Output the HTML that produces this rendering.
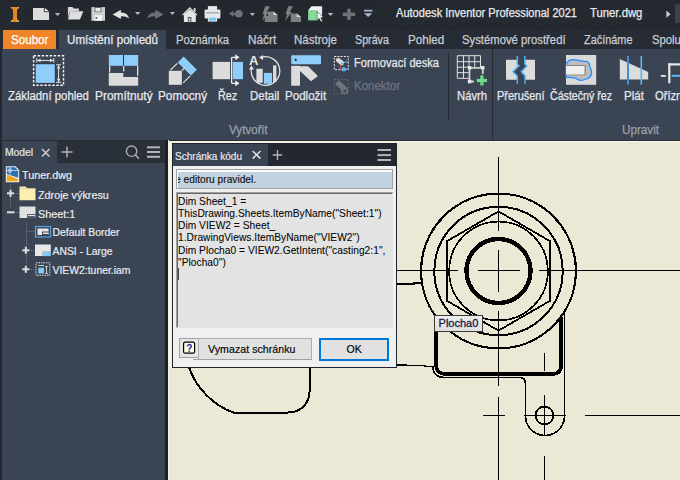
<!DOCTYPE html>
<html><head><meta charset="utf-8">
<style>
*{margin:0;padding:0;box-sizing:border-box}
html,body{width:680px;height:480px;overflow:hidden;background:#3b4453;font-family:"Liberation Sans",sans-serif}
.a{position:absolute}
.t{position:absolute;white-space:nowrap;line-height:1}
#title{left:0;top:0;width:680px;height:29px;background:#23282f}
#tabs{left:0;top:29px;width:680px;height:20px;background:#262b34}
#ribbon{left:0;top:49px;width:680px;height:91px;background:#3b4453}
.tab{color:#c9ced6;font-size:11.5px}
.lbl{color:#e6e9ee;font-size:11.5px}
.r{font-size:12px;transform-origin:0 0;-webkit-text-stroke:0.25px currentColor}
</style></head><body>
<div id="title" class="a"></div>
<div id="tabs" class="a"></div>
<div class="a" style="left:375px;top:2px;width:305px;height:25px;background:repeating-linear-gradient(-45deg,#23282f 0px,#23282f 2.2px,#292e36 2.2px,#292e36 3px)"></div>
<div class="a" style="left:0;top:2px;width:26px;height:25px;background:repeating-linear-gradient(-45deg,#23282f 0px,#23282f 2.2px,#292e36 2.2px,#292e36 3px)"></div>
<svg class="a" style="left:660px;top:0" width="20" height="29" viewBox="660 0 20 29"><path d="M666.3,10.6 L670.6,14.2 L666.3,17.8 Z" fill="#c8ccd4"/><rect x="675" y="4.4" width="5" height="18.4" fill="#3b4352"/></svg>

<div id="ribbon" class="a"></div>


<!-- QAT -->
<svg class="a" style="left:0;top:0" width="680" height="29" viewBox="0 0 680 29">
<defs><linearGradient id="og" x1="0" x2="1"><stop offset="0" stop-color="#f5a03a"/><stop offset="0.5" stop-color="#e8821f"/><stop offset="1" stop-color="#f5a841"/></linearGradient></defs>
<path d="M10.7,7.1 H19.1 V8 Q17,8.8 16.9,10.5 V18.3 Q17,20 19.1,20.8 V21.9 H10.7 V20.8 Q12.9,20 13.1,18.3 V10.5 Q12.9,8.8 10.7,8 Z" fill="url(#og)"/>
<path d="M33,8 H44.3 L49.1,11.7 V19.9 H33 Z" fill="#dcdcdc"/>
<path d="M44.6,8 L49.1,11.4 H44.6 Z" fill="#f4f4f4"/>
<path d="M44.3,8 V11.7 H49.1" stroke="#1b1f26" stroke-width="0.8" fill="none"/>
<g fill="#a9b8cf">
<path d="M54.9,13 H60.2 L57.55,16.1 Z"/>
<path d="M135,12 H140.4 L137.7,14.9 Z"/>
<path d="M169.8,12 H175 L172.4,15 Z"/>
<path d="M249.8,13 H255 L252.4,16 Z"/>
<path d="M327.7,13 H333.3 L330.5,16 Z"/>
<rect x="364" y="9.8" width="8.4" height="1.7"/>
<path d="M364,13.2 H372.4 L368.2,17 Z"/>
</g>
<!-- open -->
<path d="M67.9,7.1 H72.5 L73.8,8.4 H78.9 V11.2 H70.1 L67.9,17 Z" fill="#d6d6d6"/>
<path d="M70.1,11.2 H83.3 L80,19.6 H67.9 Z" fill="#dedede"/>
<!-- save -->
<path d="M91.4,7.1 H105 V20.75 H91.4 Z" fill="#cfcfcf"/>
<rect x="94.6" y="7.1" width="6.8" height="5" fill="#3a3f47"/>
<rect x="95.3" y="7.8" width="5.4" height="3.8" fill="#eaeaea"/>
<rect x="94.6" y="15.2" width="7.4" height="5.55" fill="#f2f2f2"/>
<rect x="95.6" y="17" width="1.6" height="1.8" fill="#555"/>
<!-- undo -->
<path d="M112.6,14.4 L120.9,9.7 V12.4 Q127.5,12 129.1,18.5 Q125.5,16 120.9,16.4 V19 Z" fill="#e2e2e2"/>
<!-- redo -->
<path d="M163.6,14.4 L155.3,9.7 V12.4 Q148.7,12 147.1,18.5 Q150.7,16 155.3,16.4 V19 Z" fill="#6a6e75"/>
<!-- home -->
<path d="M181.9,14.9 L189.8,7.1 L197.6,14.9 L196.2,15.3 L189.8,9 L183.3,15.3 Z" fill="#e6e6e6"/>
<rect x="193.7" y="8.2" width="1.8" height="3.4" fill="#e6e6e6"/>
<path d="M183.9,14.6 L189.8,9.5 L195.8,14.6 V22.1 H183.9 Z" fill="#e6e6e6"/>
<rect x="187.8" y="17" width="3.6" height="5.1" fill="#4a4f57"/>
<rect x="188.6" y="18" width="2" height="4.1" fill="#bdbdbd"/>
<!-- printer -->
<rect x="207.9" y="6.1" width="9.2" height="3.8" fill="#ececec"/>
<rect x="204.6" y="9.4" width="15.8" height="9.1" rx="1" fill="#e8e8e8"/>
<rect x="206" y="12.2" width="13" height="1.2" fill="#9aa0a8"/>
<rect x="207.9" y="16.9" width="9.2" height="4.7" fill="#ececec"/>
<rect x="208.8" y="17.6" width="7.4" height="3.2" fill="#7cc4f5"/>
<!-- gray icon -->
<circle cx="238.8" cy="13.8" r="3.8" fill="#6f7379"/>
<path d="M229,13.8 L233.5,10.8 V16.8 Z" fill="#6f7379"/>
<rect x="232" y="13" width="3.5" height="1.6" fill="#6f7379"/>
<!-- lightnings -->
<g fill="#7d7f83">
<path d="M265.2,6.2 H270 L266.8,12 H269 L262.1,21 L264.2,14.2 H262.5 Z"/>
<path d="M268,11.5 H273.5 L277.6,15 V21.9 H264.8 V16 H268 Z"/>
<path d="M288.2,6.2 H293 L289.8,12 H292 L285.1,21 L287.2,14.2 H285.5 Z"/>
<path d="M290.8,13.5 H297 L301,17 V21.9 H290.8 Z"/>
</g>
<path d="M273.4,11.5 L277.6,15 H273.4 Z M296.8,13.5 L301,17 H296.8 Z" fill="#d8d8d8"/>
<!-- green box -->
<path d="M308.1,10.4 L311.5,6.5 H322.1 V16 L317.1,20.4 V10.4 Z" fill="#ececec"/>
<path d="M311.5,6.5 H322.1 L317.1,10.4 H308.1 Z" fill="#f5f5f5"/>
<rect x="308.1" y="10.4" width="9" height="10" fill="#86d99a"/>
<path d="M317.2,11.5 L317.2,20 L319.2,18.3 L321,22 L322.5,21.2 L320.8,17.6 L323.5,17.3 Z" fill="#fafafa" stroke="#222" stroke-width="0.5"/>
<!-- plus -->
<rect x="342.8" y="12.6" width="12.3" height="3.5" fill="#6e7278"/>
<rect x="347.2" y="8.7" width="3.5" height="11.2" fill="#6e7278"/>
</svg>

<!-- title text -->
<div class="t r" style="left:396px;top:7px;color:#e8eaee;transform:scaleX(0.923)">Autodesk Inventor Professional 2021</div>
<div class="t r" style="left:590px;top:7px;color:#e8eaee;transform:scaleX(0.942)">Tuner.dwg</div>

<!-- tabs -->
<div class="a" style="left:3px;top:30px;width:53px;height:19px;background:#ef8429"></div>
<div class="t r" style="left:10.8px;top:34px;color:#ffffff;transform:scaleX(0.966)">Soubor</div>
<div class="a" style="left:59px;top:30px;width:107px;height:19px;background:#3b4453"></div>
<div class="t r" style="left:66.6px;top:34px;color:#e8ebf0;transform:scaleX(0.968)">Umístění pohledů</div>
<div class="t r" style="left:176.2px;top:34px;color:#c9ced6;transform:scaleX(0.936)">Poznámka</div>
<div class="t r" style="left:247.9px;top:34px;color:#c9ced6;transform:scaleX(0.982)">Náčrt</div>
<div class="t r" style="left:294.2px;top:34px;color:#c9ced6;transform:scaleX(0.961)">Nástroje</div>
<div class="t r" style="left:354.9px;top:34px;color:#c9ced6;transform:scaleX(0.892)">Správa</div>
<div class="t r" style="left:408.1px;top:34px;color:#c9ced6;transform:scaleX(0.969)">Pohled</div>
<div class="t r" style="left:462.0px;top:34px;color:#c9ced6;transform:scaleX(0.941)">Systémové prostředí</div>
<div class="t r" style="left:583.9px;top:34px;color:#c9ced6;transform:scaleX(0.909)">Začínáme</div>
<div class="t r" style="left:651.9px;top:34px;color:#c9ced6;transform:scaleX(0.94)">Spolupráce</div>

<!-- ribbon labels -->
<div class="t r" style="left:7.5px;top:90px;color:#e6e9ee;transform:scaleX(0.947)">Základní pohled</div>
<div class="t r" style="left:95px;top:90px;color:#e6e9ee;transform:scaleX(0.993)">Promítnutý</div>
<div class="t r" style="left:157.8px;top:90px;color:#e6e9ee;transform:scaleX(0.98)">Pomocný</div>
<div class="t r" style="left:218px;top:90px;color:#e6e9ee;transform:scaleX(0.9)">Řez</div>
<div class="t r" style="left:249.7px;top:90px;color:#e6e9ee;transform:scaleX(0.955)">Detail</div>
<div class="t r" style="left:284.5px;top:90px;color:#e6e9ee;transform:scaleX(0.964)">Podložit</div>
<div class="t r" style="left:456.6px;top:90px;color:#e6e9ee;transform:scaleX(0.942)">Návrh</div>
<div class="t r" style="left:497.3px;top:90px;color:#e6e9ee;transform:scaleX(0.912)">Přerušení</div>
<div class="t r" style="left:550px;top:90px;color:#e6e9ee;transform:scaleX(0.886)">Částečný řez</div>
<div class="t r" style="left:623.6px;top:90px;color:#e6e9ee;transform:scaleX(0.97)">Plát</div>
<div class="t r" style="left:654.8px;top:90px;color:#e6e9ee;transform:scaleX(0.93)">Oříznout</div>
<div class="t r" style="left:354.2px;top:57px;color:#e6e9ee;transform:scaleX(0.923)">Formovací deska</div>
<div class="t r" style="left:354.2px;top:80px;color:#6f7682;transform:scaleX(0.957)">Konektor</div>
<div class="t r" style="left:229px;top:124px;color:#9aa1ab;transform:scaleX(0.97)">Vytvořit</div>
<div class="t r" style="left:622px;top:124px;color:#9aa1ab;transform:scaleX(0.973)">Upravit</div>
<div class="a" style="left:448px;top:52px;width:1px;height:69px;background:#262b33"></div>
<div class="a" style="left:492px;top:49px;width:1px;height:91px;background:#262b33"></div>


<!-- ribbon icons -->
<svg class="a" style="left:0;top:0" width="680" height="140" viewBox="0 0 680 140">
<!-- Zakladni pohled -->
<rect x="33.6" y="55.8" width="29.9" height="29.4" fill="none" stroke="#f0f0f0" stroke-width="1.5" stroke-dasharray="2.5,1.5"/>
<rect x="35.2" y="63.7" width="20.1" height="19.7" fill="#2b3038"/>
<rect x="35.7" y="64.2" width="19.1" height="18.7" fill="#8fcdfa"/>
<g stroke="#e8e8e8" stroke-width="1" fill="none">
<path d="M36.8,58 V62.5 M53.8,58 V62.5 M37,60.4 H53.5"/>
<path d="M56.2,64.8 H61 M56.2,82.3 H61 M58.6,65 V82"/>
</g>
<g fill="#e8e8e8">
<path d="M37.5,60.4 L40.5,58.6 V62.2 Z M53,60.4 L50,58.6 V62.2 Z"/>
<path d="M58.6,65.5 L56.8,68.5 H60.4 Z M58.6,81.8 L56.8,78.8 H60.4 Z"/>
</g>
<!-- Promitnuty -->
<rect x="108.8" y="55" width="29.4" height="10.8" fill="#8fcdfa"/>
<rect x="123" y="55" width="1" height="10.8" fill="#2b3038"/>
<path d="M108.8,72.9 H123.3 V77 H138.2 V85.8 H108.8 Z" fill="#dcdcdc"/>
<g fill="#e0e0e0">
<rect x="109" y="66" width="1.3" height="6.5"/>
<rect x="123" y="66" width="1.3" height="5.5"/>
<rect x="137" y="66" width="1.3" height="9.8"/>
</g>
<!-- Pomocny -->
<rect x="168.8" y="70.8" width="13.1" height="14" fill="#dcdcdc"/>
<polygon points="177.75,62.5 183.6,56.5 196.9,69.8 191,75.4" fill="#8fcdfa"/>
<g stroke="#e0e0e0" stroke-width="1.1">
<path d="M170.5,70 L177.3,63.3 M183.2,82.9 L190.25,75.8 M182,70.5 L184.5,68"/>
</g>
<!-- Rez -->
<rect x="212.6" y="61.9" width="17.4" height="17.3" fill="#dcdcdc"/>
<rect x="232.8" y="61.9" width="10.2" height="17.3" fill="#8fcdfa"/>
<path d="M231.6,57.3 V83.3 M231.6,57.3 H236 M231.6,83.3 H236" stroke="#f0f0f0" stroke-width="1.3" fill="none"/>
<path d="M239.5,57.3 L235.3,54.3 V60.3 Z M239.5,83.3 L235.3,80.3 V86.3 Z" fill="#f0f0f0"/>
<!-- Detail -->
<path d="M261.5,57.3 A14.3,14.3 0 1 1 251.5,68" stroke="#e0e0e0" stroke-width="1.3" fill="none"/>
<path d="M259,57.5 L263,55 V60 Z M251.4,65.5 L249,69.5 H254 Z" fill="#e8e8e8"/>
<text x="249" y="64.8" font-family="Liberation Sans" font-weight="bold" font-size="13" fill="#e8e8e8">A</text>
<rect x="256.4" y="68.75" width="6.3" height="14" fill="#dcdcdc"/>
<rect x="263.9" y="72.9" width="8.1" height="10.9" fill="#8fcdfa"/>
<rect x="273" y="65.4" width="3.4" height="16.6" fill="#dcdcdc"/>
<!-- Podlozit -->
<rect x="291.2" y="55.2" width="29.8" height="9" rx="1" fill="#8fcdfa"/>
<circle cx="295.75" cy="59.8" r="1.1" fill="#111"/>
<rect x="291.2" y="65.8" width="8.8" height="19.9" fill="#dcdcdc"/>
<polygon points="295.5,66.3 308,66.3 317.5,75.5 317.5,76.5 311,81.3 300,71" fill="#dcdcdc"/>
<!-- Formovaci deska -->
<rect x="334.3" y="56.5" width="14" height="13.2" fill="none" stroke="#e8e8e8" stroke-width="1" stroke-dasharray="2,1.2"/>
<rect x="335.5" y="59.3" width="9" height="4.6" rx="2" transform="rotate(38 340 61.6)" fill="#d8d8d8"/>
<path d="M342,63 Q339,66 340.5,70" stroke="#e0604a" stroke-width="1" fill="none"/>
<path d="M342,64 L345,62 H348" stroke="#5ab4f0" stroke-width="1" fill="none"/>
<circle cx="343.8" cy="69.3" r="2.2" fill="#5ab4f0"/>
<rect x="345" y="68.6" width="3.5" height="1.4" fill="#5ab4f0"/>
<!-- Konektor -->
<rect x="334.3" y="79.5" width="14" height="14.3" fill="none" stroke="#6a707a" stroke-width="1" stroke-dasharray="1.5,2"/>
<rect x="335.5" y="83" width="11" height="5.5" rx="1.5" transform="rotate(42 341 85.7)" fill="#6e747e"/>
<circle cx="344.5" cy="90.5" r="2.8" fill="none" stroke="#6e747e" stroke-width="1.6"/>
<!-- Navrh -->
<g stroke="#e0e0e0" stroke-width="1" fill="none">
<path d="M457.3,55.7 H480.5 V67 M457.3,61.7 H480.5 M457.3,67.2 H469 M457.3,72.7 H469 M457.3,78.3 H469 M457.3,55.7 V78.3 M463.5,55.7 V78.3 M469,55.7 V67 M474.7,55.7 V67"/>
</g>
<g stroke="#d0d0d0" stroke-width="1.8" fill="none">
<path d="M469.5,67.8 H482.8 V74 M469.5,67.8 V81.5 H474"/>
</g>
<g fill="#e8e8e8">
<rect x="467.8" y="66" width="3.5" height="3.5"/><rect x="481" y="66" width="3.5" height="3.5"/><rect x="467.8" y="79.8" width="3.5" height="3.5"/>
</g>
<rect x="476.8" y="78.9" width="10.2" height="3.2" fill="#6ddc8a"/>
<rect x="480.3" y="75.3" width="3.2" height="10.2" fill="#6ddc8a"/>
<!-- Prerusení -->
<polygon points="506,59.8 517.3,59.8 517.3,64 519,65.8 513,71.8 517.3,76 517.3,79.8 506,79.8" fill="#dcdcdc"/>
<polygon points="535,59.8 524.8,59.8 524.8,64 526.7,66 521.3,71.8 525,75.8 525,79.8 535,79.8" fill="#dcdcdc"/>
<path d="M517.3,56 V64 L519,65.8 L513,71.8 L517.3,76 V83.8 M524.8,56 V64 L526.7,66 L521.3,71.8 L525,75.8 V83.8" stroke="#4fb0f0" stroke-width="1.5" fill="none"/>
<!-- Castecny rez -->
<rect x="566" y="55" width="30.2" height="29.8" fill="#d9d9d9"/>
<path d="M566,63.75 C568,61 571,59.6 572.8,59.6 C577,59.6 581,61.5 585.3,61.3 C588,61.3 589.5,63 589.5,65.4 C590,68 592,70.5 591.6,73.3 C591,76 590,77.5 587.8,78.3 C585,79.5 583,80.4 581.2,80.4 C578,80.4 576.5,78 574.5,77.9 L566,77.1 Z" fill="#bdbdbd" stroke="#1a8cff" stroke-width="1.3"/>
<rect x="566" y="65" width="19.75" height="10.4" fill="#888"/>
<rect x="566" y="66" width="18.5" height="8.5" fill="#f0f0f0"/>
<!-- Plat -->
<polygon points="619.8,59 648.2,72.1 648.2,79.6 619.8,79.6" fill="#dcdcdc"/>
<rect x="627" y="56" width="2" height="28.6" fill="#3d8fd1"/>
<rect x="640.5" y="56" width="1.6" height="28.6" fill="#5fb6f2"/>
<!-- Oriznout -->
<rect x="660.8" y="75" width="5" height="1.8" fill="#e8e8e8"/>
<rect x="668.2" y="63.3" width="2.2" height="20" fill="#e8e8e8"/>
<rect x="668.2" y="63.3" width="12" height="2.2" fill="#e8e8e8"/>
<rect x="671.7" y="74.8" width="9" height="2" fill="#5fb6f2"/>
</svg>

<!-- browser panel -->
<div class="a" style="left:0;top:49px;width:2px;height:431px;background:#22272e"></div>
<div class="a" style="left:0;top:140px;width:169px;height:1px;background:#262b33"></div>
<div class="a" style="left:2px;top:141px;width:163px;height:22px;background:#2a3039"></div>
<div class="a" style="left:2px;top:141px;width:55px;height:22px;background:#3b4453"></div>
<div class="t" style="left:4.5px;top:146.5px;color:#e6e9ee;font-size:11px;transform:scaleX(0.94);transform-origin:0 0;-webkit-text-stroke:0.2px currentColor">Model</div>
<div class="a" style="left:165px;top:140px;width:4px;height:340px;background:#1c2028"></div>


<!-- tree -->
<svg class="a" style="left:0;top:138px" width="168" height="342" viewBox="0 138 168 342">
<g fill="none" stroke="#c8c8c8" stroke-width="1.6">
<path d="M42,149 L49.5,156.5 M49.5,149 L42,156.5"/>
<path d="M67,146.5 V157.5 M61.5,152 H72.5" stroke="#b4b4b4" stroke-width="1.4"/>
<circle cx="131.6" cy="151.2" r="5.2" stroke="#a9a9a9" stroke-width="1.4"/>
<path d="M135.5,155 L139,158.8" stroke="#a9a9a9" stroke-width="1.6"/>
</g>
<g fill="#b4b4b4">
<rect x="147" y="146.3" width="13" height="2"/>
<rect x="147" y="151" width="13" height="2"/>
<rect x="147" y="155.8" width="13" height="2"/>
</g>
<!-- dotted tree lines -->
<g stroke="#737a84" stroke-width="1" stroke-dasharray="1,1">
<path d="M10.5,184 V190 M10.5,197 V209 M14,193.5 H19 M14,212.5 H19"/>
<path d="M26.5,222 V248 M26.5,253 V266 M26.5,231.5 H35 M29,250.5 H35 M29,269.5 H35"/>
</g>
<!-- plus / minus -->
<g fill="#dedede">
<rect x="7" y="192.3" width="7" height="2"/><rect x="9.5" y="189.8" width="2" height="7"/>
<rect x="7" y="211.3" width="7.5" height="2"/>
<rect x="22.3" y="249.3" width="7" height="2"/><rect x="24.8" y="246.8" width="2" height="7"/>
<rect x="22.3" y="268.3" width="7" height="2"/><rect x="24.8" y="265.8" width="2" height="7"/>
</g>
<!-- Tuner.dwg icon -->
<path d="M5.8,166.3 H15.5 L19.2,170 V182.2 H5.8 Z" fill="#f2f2f2"/>
<path d="M6.8,167.3 H15 L18.2,170.5 V177.8 L6.8,174 Z" fill="#2f6fb6"/>
<path d="M6.8,174.5 L18.2,179.2 V181.2 H6.8 Z" fill="#f2a51c"/>
<circle cx="10" cy="170.5" r="1.6" fill="none" stroke="#e8eef5" stroke-width="0.8"/>
<path d="M10,167.3 V174.5 M6.8,170.5 H18.2" stroke="#dfe6ee" stroke-width="0.7"/>
<!-- folder -->
<path d="M19.5,186.5 H25.5 L27.5,188.5 H35.5 V200.3 H19.5 Z" fill="#fcedb0"/><path d="M19.5,188.5 H35.5" stroke="#d9c88a" stroke-width="0.8"/>
<!-- sheet -->
<rect x="19.5" y="206.5" width="16" height="11.5" fill="#e2e2e2"/>
<rect x="27" y="214" width="8.5" height="4" fill="#5a6070"/>
<rect x="28" y="215" width="7" height="1" fill="#e2e2e2"/>
<!-- default border -->
<rect x="35.5" y="226.5" width="15" height="10.5" fill="#3b4453" stroke="#4fa6e3" stroke-width="1.2"/>
<rect x="37.5" y="228.5" width="11" height="6.5" fill="#e8e8e8"/>
<rect x="42" y="231.5" width="6.5" height="3.5" fill="#3b4453"/>
<rect x="43" y="232.5" width="5.5" height="1.5" fill="#e8e8e8"/>
<!-- ANSI -->
<path d="M35,244.5 H50.8 V251.8 H42.8 V256 H35 Z" fill="#e6e6e6"/>
<rect x="42.8" y="251.8" width="8" height="4.3" fill="#86c8f5"/>
<!-- VIEW2 -->
<rect x="36" y="262.8" width="13.8" height="12.5" fill="none" stroke="#e0e0e0" stroke-width="1" stroke-dasharray="1.5,1"/>
<rect x="38.3" y="267.7" width="5.8" height="5.8" fill="#86c8f5"/>
<path d="M46.5,266.5 V273.5 M45.2,266.5 H47.8 M45.2,273.5 H47.8 M38.3,265.5 H44" stroke="#e0e0e0" stroke-width="0.9" fill="none"/>
</svg>
<div class="t" style="left:22px;top:170px;color:#e8ebef;font-size:10.8px;-webkit-text-stroke:0.2px currentColor">Tuner.dwg</div>
<div class="t" style="left:38px;top:190px;color:#e8ebef;font-size:10.8px;-webkit-text-stroke:0.2px currentColor">Zdroje výkresu</div>
<div class="t" style="left:38px;top:208.5px;color:#e8ebef;font-size:10.8px;-webkit-text-stroke:0.2px currentColor">Sheet:1</div>
<div class="t" style="left:52.5px;top:228px;color:#e8ebef;font-size:10.4px;-webkit-text-stroke:0.2px currentColor">Default Border</div>
<div class="t" style="left:52.5px;top:247.3px;color:#e8ebef;font-size:10.4px;-webkit-text-stroke:0.2px currentColor">ANSI - Large</div>
<div class="t" style="left:52.5px;top:266px;color:#e8ebef;font-size:10.4px;-webkit-text-stroke:0.2px currentColor">VIEW2:tuner.iam</div>

<!-- canvas -->
<div class="a" style="left:169px;top:141px;width:511px;height:339px;background:#ebe9d5"></div>



<!-- canvas frame -->
<div class="a" style="left:169px;top:140px;width:511px;height:1px;background:#2a2f37"></div>
<div class="a" style="left:169px;top:141px;width:511px;height:1px;background:#f7f6ea"></div>
<div class="a" style="left:168px;top:140px;width:1px;height:340px;background:#f2f1e4"></div>
<svg class="a" style="left:0;top:0" width="680" height="480" viewBox="0 0 680 480">
<g fill="none" stroke="#000" shape-rendering="crispEdges">
<circle cx="498.5" cy="271" r="77.4" stroke-width="2.2"/>
<circle cx="498.5" cy="271" r="64.2" stroke-width="2"/>
<circle cx="498.5" cy="271" r="49.4" stroke-width="1.7"/>
<polygon points="498.5,211.4 550.1,241.2 550.1,300.8 498.5,330.6 446.9,300.8 446.9,241.2" stroke-width="1.8"/>
<circle cx="498.5" cy="271" r="32" stroke-width="4.4"/>
<!-- casting body -->
<path d="M436,317 L436,364 Q436,374 446,374 L552,374 Q561.2,374 561.2,365 L561.2,317" stroke-width="3.6"/>
<path d="M397,364.8 L406,364.8 L406,365.6 L425,365.6 L425,366.5 L433,366.5 Q433,377.5 445,377.5 L520,377.5 Q525.5,377.5 525.5,384 L525.5,416 A19.5,19.5 0 0 0 564.5,416 L564.5,312" stroke-width="1.7"/>
<path d="M397,283.5 L413.5,283.5 L413.5,282.5 L422,282.5" stroke-width="2"/>
<circle cx="544.5" cy="415.5" r="9" stroke-width="1.7"/>
<path d="M189.3,368 C196,388 214,406 233.5,412.5 L288,412.5 C300,412.5 309.6,404 309.6,391 L309.6,367" stroke-width="2"/>
</g>
<g stroke="#000" stroke-width="1" shape-rendering="crispEdges">
<path d="M498.5,157 V231 M498.5,250 V292 M498.5,311 V386 M498.5,397 V480"/>
<path d="M397,270.5 H458 M477.5,270.5 H520 M539,270.5 H680"/>
<path d="M483,415.5 H505 M523.5,415.5 H566 M584.5,415.5 H680"/>
<path d="M544.5,352.5 V371 M544.5,394.5 V435 M544.5,455.5 V480"/>
</g>
</svg>
<!-- tooltip -->
<div class="a" style="left:434px;top:314.5px;width:48.5px;height:17px;border:1px solid #3a3a3a;background:linear-gradient(#eeeeee,#e0e0e0)"></div>
<div class="t" style="left:438.6px;top:318.2px;color:#1c1a48;font-size:11px;-webkit-text-stroke:0.3px currentColor">Plocha0</div>

<!-- dialog -->
<div class="a" style="left:169px;top:141px;width:228px;height:227px;background:#f3f1df"></div>
<div class="a" style="left:172px;top:143px;width:225px;height:225px;background:#1f2530"></div>
<div class="a" style="left:173px;top:144px;width:223px;height:22px;background:#232830"></div>
<div class="a" style="left:173px;top:144px;width:95px;height:22px;background:#3b4453"></div>
<div class="t" style="left:175.2px;top:149.5px;color:#e6e9ee;font-size:11.6px;transform:scaleX(0.866);transform-origin:0 0;-webkit-text-stroke:0.2px currentColor">Schránka kódu</div>
<svg class="a" style="left:240px;top:142px" width="160" height="24" viewBox="240 142 160 24">
<path d="M252.6,151 L260.5,158.6 M260.5,151 L252.6,158.6" stroke="#e2e2e2" stroke-width="1.5"/>
<path d="M277.5,150.1 V160.1 M272.7,155 H282.2" stroke="#b4b4b4" stroke-width="1.4"/>
<g fill="#b4b4b4"><rect x="377.5" y="149" width="13.5" height="2"/><rect x="377.5" y="154.1" width="13.5" height="2"/><rect x="377.5" y="159" width="13.5" height="2"/></g>
</svg>
<div class="a" style="left:173px;top:166px;width:223px;height:201px;background:#f0f0f0"></div>
<div class="a" style="left:176px;top:169px;width:217px;height:20px;background:#fff;border:1px solid #a3a3a3"></div>
<div class="a" style="left:178px;top:172px;width:214px;height:16px;background:#c3d2df;overflow:hidden"><div class="t" style="left:-2.9px;top:3px;color:#111;font-size:10.2px;-webkit-text-stroke:0.15px currentColor">e editoru pravidel.</div></div>
<div class="a" style="left:176px;top:192px;width:217px;height:136px;background:#e3e3e3;border-top:1px solid #a0a0a0;border-left:1px solid #a0a0a0"></div>
<div class="a" style="left:177px;top:193px;width:215px;height:1px;background:#696969"></div>
<div class="a" style="left:177px;top:193px;width:1px;height:134px;background:#696969"></div>
<div class="a" style="left:178px;top:196px;color:#000;font-size:10.2px;line-height:12.15px;white-space:pre;letter-spacing:0.04px;-webkit-text-stroke:0.05px currentColor">Dim Sheet_1 =
ThisDrawing.Sheets.ItemByName("Sheet:1")
Dim VIEW2 = Sheet_
1.DrawingViews.ItemByName("VIEW2")
Dim Plocha0 = VIEW2.GetIntent("casting2:1",
"Plocha0")</div>
<div class="a" style="left:178px;top:268px;width:1px;height:12px;background:#444"></div>
<div class="a" style="left:179px;top:338px;width:20px;height:20px;background:#e6e6e6;border:1px solid #a0a0a0"></div>
<svg class="a" style="left:179px;top:338px" width="20" height="22" viewBox="179 338 20 22">
<rect x="183.6" y="342.2" width="11" height="11" rx="1.5" fill="#fdfde0" stroke="#000" stroke-width="1.2"/>
<text x="186.3" y="351.8" font-family="Liberation Sans" font-weight="bold" font-size="10" fill="#1a1aa0">?</text>
</svg>
<div class="a" style="left:198px;top:338px;width:114px;height:22px;background:#e1e1e1;border:1px solid #adadad"></div>
<div class="t" style="left:208px;top:343.5px;color:#000;font-size:10.6px;letter-spacing:0.05px;-webkit-text-stroke:0.15px currentColor">Vymazat schránku</div>
<div class="a" style="left:193px;top:359px;width:119px;height:1px;background:#a0a0a0"></div>
<div class="a" style="left:319px;top:338px;width:70px;height:23px;background:#e1e1e1;border:2px solid #0078d7"></div>
<div class="t" style="left:346.5px;top:343.5px;color:#000;font-size:10.6px;-webkit-text-stroke:0.15px currentColor">OK</div>
</body></html>
